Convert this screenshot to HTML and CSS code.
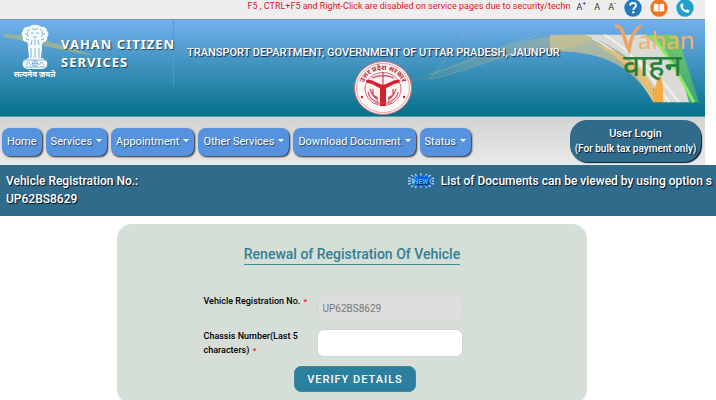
FILE: index.html
```html
<!DOCTYPE html>
<html lang="en">
<head>
    <meta charset="UTF-8">
    <meta name="viewport" content="width=device-width, initial-scale=1">
    <title>Vahan Citizen Services</title>
    <link rel="stylesheet" href="styles.css">
</head>
<body>

<div class="page-top">
    <!-- top strip -->
    <div class="topbar">
        <div class="top-marquee">F5 , CTRL+F5 and Right-Click are disabled on service pages due to security/techn</div>
        <div class="font-size">
            <button type="button" aria-label="Larger text">A<sup>+</sup></button>
            <button type="button" aria-label="Normal text">A</button>
            <button type="button" aria-label="Smaller text">A<sup>-</sup></button>
        </div>
        <div class="top-links">
            <a href="#" aria-label="Help">
                <svg width="18" height="18" viewBox="0 0 18 18">
                    <circle cx="9" cy="9" r="8.7" fill="#2478bd"/>
                    <path d="M6 6.6C6.2 4.7 7.4 4 9 4c1.8 0 3 .9 3 2.5 0 2.1-2.6 2-2.6 4.4" fill="none" stroke="#fff" stroke-width="1.9"/>
                    <circle cx="9.3" cy="13.3" r="1.2" fill="#fff"/>
                </svg>
            </a>
            <a href="#" aria-label="Manual">
                <svg width="18" height="18" viewBox="0 0 18 18">
                    <circle cx="9" cy="9" r="8.7" fill="#ee7420"/>
                    <path d="M3.8 5.2c2-.8 3.8-.6 5.2.5 1.4-1.1 3.2-1.3 5.2-.5v7.3c-2-.6-3.8-.4-5.2.6-1.4-1-3.2-1.2-5.2-.6z" fill="#fff"/>
                    <path d="M9 5.7v7.2" stroke="#ee7420" stroke-width="1"/>
                </svg>
            </a>
            <a href="#" aria-label="Contact">
                <svg width="18" height="18" viewBox="0 0 18 18">
                    <circle cx="9" cy="9" r="8.7" fill="#209fd0"/>
                    <path d="M6.3 4.2 7.7 6.7 6.7 8c.7 1.5 1.7 2.5 3.2 3.2l1.3-1 2.5 1.5c-.3 1.5-1.3 2.3-2.7 2C7.5 13 4.8 10.3 4.3 7c-.2-1.4.6-2.5 2-2.8z" fill="#fff"/>
                </svg>
            </a>
        </div>
    </div>

    <!-- banner -->
    <header class="banner">
        <svg class="banner-art" viewBox="0 0 705 97" preserveAspectRatio="none" aria-hidden="true">
            <defs>
                <linearGradient id="tail" x1="0" x2="1">
                    <stop offset="0" stop-color="#d8b95f" stop-opacity="0"/>
                    <stop offset=".45" stop-color="#d8c06f" stop-opacity=".45"/>
                    <stop offset="1" stop-color="#e8b45c"/>
                </linearGradient>
                <linearGradient id="leaf" x1="0" x2="0" y1="0" y2="1">
                    <stop offset="0" stop-color="#7ccf5c"/>
                    <stop offset="1" stop-color="#3fa878"/>
                </linearGradient>
            </defs>
            <path d="M4 14c30 2 60 12 90 22-30-4-60-13-90-19z" fill="#b9bc76" opacity=".65"/>
            <path d="M392 64C460 50 500 18 570 15h35c-22 9-42 17-56 17-60 0-90 30-157 32z" fill="url(#tail)" opacity=".45"/>
            <path d="M430 60c12-14 22-30 35-45M430 60c45-10 90-32 138-45M430 55c40-12 68-29 110-40" fill="none" stroke="#dcc46c" opacity=".3"/>
            <path d="M550 15h57c34 17 48 40 54 67h-8c-21-35-50-52-103-50z" fill="#e3c98b" opacity=".6"/>
            <path d="M585 15h62c20 12 34 43 46 68h-32c-13-35-45-57-76-68z" fill="#dadbd7"/>
            <path d="M604 15c26 14 45 38 65 68M592 18c29 15 45 35 62 64M630 36c24 13 35 29 49 47" fill="none" stroke="#fff" stroke-width="2" opacity=".6"/>
            <path d="M592 23c27 13 49 35 61 59V66c-14-21-35-35-61-43z" fill="#e5bf78"/>
            <path d="M660 55c-5 11-7 18-7 28h10c0-10 1-19-3-28z" fill="#f4ad43"/>
            <path d="M645 15h32l22 68h-10c-7-28-18-47-44-68z" fill="url(#leaf)" opacity=".9"/>
            <path d="M651 16c17 18 27 38 43 67" fill="none" stroke="#8aed63" stroke-width="3"/>
        </svg>
        <div class="brand">
            <div class="emblem">
                <svg width="30" height="46" viewBox="0 0 30 46" aria-hidden="true">
                    <g fill="#f4fbff">
                        <path d="M9 3c2-3 10-3 12 0 3-1 6 1 6 4 2 2 2 4 0 6 1 3-1 5-4 5l-2 5H9l-2-5c-3 0-5-2-4-5-2-2-2-4 0-6 0-3 3-5 6-4z"/>
                        <path d="M8 22h14v3l-1 8c1 2 5 2 6 5 1 4-1 7-5 7H8c-4 0-6-3-5-7 1-3 5-3 6-5l-1-8z"/>
                    </g>
                    <g fill="none" stroke="#7da9cf" stroke-width=".9">
                        <path d="M10 5c-3 2-3 6-1 8m11-8c3 2 3 6 1 8M12 4c1 2 5 2 6 0M11 9h3m2 0h3M13 13h4M5 9l2 2m18-2-2 2M6 15l3 1m15-1-3 1M12 16l-1 5m7-5 1 5M15 15v6"/>
                        <path d="M11 24v10m4-10v10m4-10v10M4 36h22M5 43h20"/>
                        <circle cx="15" cy="39.5" r="2.8"/>
                        <path d="M12 39.5h6m-3-3v6M6 41l2-3 3 3m8 0 2-3 3 3"/>
                    </g>
                </svg>
                <span>सत्यमेव जयते</span>
            </div>
            <h1>VAHAN CITIZEN<br>SERVICES</h1>
        </div>
        <div class="department">
            <h2>TRANSPORT DEPARTMENT, GOVERNMENT OF UTTAR PRADESH, JAUNPUR</h2>
            <svg class="seal" width="58" height="54" viewBox="0 0 58 54" aria-hidden="true">
                <ellipse cx="29" cy="27" rx="28.5" ry="26.5" fill="#fff8f8" stroke="#d76d76"/>
                <ellipse cx="29" cy="27" rx="26.5" ry="24.5" fill="none" stroke="#d77b83" stroke-width=".7"/>
                <path id="sealArc" d="M9 27a20 18 0 0 1 40 0" fill="none"/>
                <text font-size="7" font-weight="700" fill="#b52d3b"><textPath href="#sealArc" startOffset="50%" text-anchor="middle">उत्तर प्रदेश सरकार</textPath></text>
                <ellipse cx="29" cy="28" rx="18" ry="16.5" fill="#fff2f2" stroke="#d46b73"/>
                <path d="M12 19c7-1 9 3 17 5 8-2 10-6 17-5l-1 3c-6 0-9 4-13 5v18h-6V27c-4-1-7-5-13-5z" fill="#d4202e"/>
                <path d="M29 11v13M18 17c7-3 15-3 22 0M16 28c2 6 5 9 8 11M42 28c-2 6-5 9-8 11M19 28v6l5 3M39 28v6l-5 3M14 31c1 6 5 9 10 10M44 31c-1 6-5 9-10 10M20 42h18" fill="none" stroke="#cb4854" stroke-width="1.2"/>
                <circle cx="8" cy="36" r="1.2" fill="#d4202e"/>
                <circle cx="50" cy="36" r="1.2" fill="#d4202e"/>
            </svg>
        </div>
        <svg class="vahan-logo" width="82" height="62" viewBox="0 0 82 62" role="img" aria-label="Vahan">
            <text x="24" y="25" class="logo-en">ahan</text>
            <path d="M1 2c6 0 7 4 9 10 2 5 2 9 5 14C17 14 20 5 27 2" fill="none" stroke="#efa262" stroke-width="3.5"/>
            <text x="9" y="52" class="logo-hi">वाहन</text>
        </svg>
    </header>

    <!-- menu -->
    <nav class="menu">
        <div class="menu-items">
            <button type="button">Home</button>
            <button type="button" class="drop">Services</button>
            <button type="button" class="drop">Appointment</button>
            <button type="button" class="drop">Other Services</button>
            <button type="button" class="drop">Download Document</button>
            <button type="button" class="drop">Status</button>
        </div>
        <button type="button" class="login">User Login<small>(For bulk tax payment only)</small></button>
    </nav>
</div>

<!-- vehicle strip -->
<div class="vehicle-bar">
    <div class="vehicle-no">Vehicle Registration No.:<br>UP62BS8629</div>
    <div class="vehicle-marquee">
        <svg width="28" height="16" viewBox="0 0 28 16" aria-hidden="true">
            <path d="M1 8h26M1 5l26 6M1 11l26-6M4 2l20 12M4 14 24 2M8 1l12 14M8 15 20 1M14 0v16" stroke="#9fd0ff" stroke-width="1.3" stroke-dasharray="3 1"/>
            <path d="m6 4 3 1 1-3 3 2 2-2 2 2 3-2 1 3 3-1-2 4 2 4-3-1-1 3-3-2-2 2-2-2-3 2-1-3-3 1 2-4z" fill="#0864ee"/>
            <text x="14" y="11" class="new-text">NEW</text>
        </svg>
        <span>List of Documents can be viewed by using option s</span>
    </div>
</div>

<!-- form -->
<main>
    <form class="card">
        <h3>Renewal of Registration Of Vehicle</h3>
        <div class="fields">
            <label for="regNo">Vehicle Registration No. <b>*</b></label>
            <input type="text" id="regNo" value="UP62BS8629" disabled>
            <label for="chassisNo">Chassis Number(Last 5 characters) <b>*</b></label>
            <input type="text" id="chassisNo" maxlength="5">
        </div>
        <button type="button" class="verify">VERIFY DETAILS</button>
    </form>
</main>

</body>
</html>
```
FILE: styles.css
```css
* {
    box-sizing: border-box;
}
body {
    margin: 0;
    background: #fff;
    font-family: Roboto, "Noto Sans", sans-serif;
    color: #000;
}
h1, h2, h3 {
    margin: 0;
}
button, input {
    font-family: inherit;
}
.page-top {
    margin-right: 11px;
}

/* top strip */
.topbar {
    display: flex;
    justify-content: flex-end;
    height: 19px;
    padding-right: 11px;
    background: #eee;
    overflow: hidden;
}
.top-marquee {
    white-space: nowrap;
    color: #e8101c;
    font-size: 9px;
    font-weight: 400;
    line-height: 12px;
}
.font-size {
    display: flex;
    gap: 8px;
    margin-left: 6px;
}
.font-size button {
    padding: 0;
    border: 0;
    background: none;
    color: #333;
    font-size: 9px;
    line-height: 14px;
    display: flex;
}
.font-size sup {
    font-size: 7px;
    line-height: 9px;
}
.top-links {
    display: flex;
    gap: 8px;
    margin-left: 8px;
}
.top-links svg {
    display: block;
    margin-top: -1px;
}

/* banner */
.banner {
    position: relative;
    display: flex;
    height: 98px;
    border-top: 1px solid #6b9fb0;
    border-bottom: 1px solid #5a9ba8;
    background: linear-gradient(#73b0ed, #05718a);
    color: #fff;
}
.banner-art {
    position: absolute;
    width: 100%;
    height: 100%;
}
.brand {
    position: relative;
    display: flex;
    align-items: flex-start;
    gap: 4px;
    width: 174px;
    height: 66px;
    padding: 4px 0 0 12px;
    border-right: 1px solid #5b97c6;
}
.emblem {
    display: flex;
    flex-direction: column;
    align-items: center;
    width: 45px;
    flex: none;
}
.emblem span {
    font-size: 8px;
    font-weight: 700;
    line-height: 10px;
    white-space: nowrap;
}
.brand h1 {
    margin-top: 11px;
    font-family: "Noto Sans", sans-serif;
    font-size: 13px;
    font-weight: 700;
    line-height: 18px;
    letter-spacing: 1px;
    white-space: nowrap;
    text-shadow: 1px 1px 1px #245;
}
.department {
    position: relative;
    display: flex;
    flex-direction: column;
    align-items: center;
    width: 404px;
    padding: 25px 0 0 13px;
}
.department h2 {
    align-self: flex-start;
    font-size: 11px;
    font-weight: 500;
    line-height: 16px;
    white-space: nowrap;
    text-shadow: 1px 1px 1px #124;
}
.seal {
    display: block;
}
.vahan-logo {
    position: absolute;
    right: 9px;
    top: 4px;
}
.logo-en {
    font-family: "Noto Sans", sans-serif;
    font-size: 24px;
    fill: #f4b070;
}
.logo-hi {
    font-family: "Noto Sans", sans-serif;
    font-size: 30px;
    font-weight: 500;
    fill: #23823d;
}

/* menu */
.menu {
    display: flex;
    justify-content: space-between;
    height: 48px;
    padding: 3px 4px 0 2px;
    background: linear-gradient(#d3d3d3, #e9e9e9);
}
.menu-items {
    display: flex;
    align-items: flex-start;
    gap: 4px;
    padding-top: 8px;
}
.menu-items button {
    height: 28px;
    padding: 0 5px;
    border: 0;
    border-radius: 8px;
    background: #5593df;
    box-shadow: 1px 1px 2px #222;
    color: #fff;
    font-size: 11px;
    font-weight: 400;
    line-height: 28px;
    white-space: nowrap;
    text-shadow: 1px 1px 1px #246;
}
.drop::after {
    content: "";
    display: inline-block;
    margin-left: 4px;
    border: 3px solid transparent;
    border-top-color: #fff;
    border-bottom: 0;
    vertical-align: 3px;
}
.login {
    width: 131px;
    height: 42px;
    padding: 0;
    border: 0;
    border-radius: 17px;
    background: #316b8c;
    box-shadow: 1px 1px 1px #012;
    color: #fff;
    font-size: 11px;
    font-weight: 500;
    line-height: 15px;
    text-shadow: 1px 1px 1px #012;
}
.login small {
    display: block;
    font-size: 10px;
}

/* vehicle strip */
.vehicle-bar {
    display: flex;
    justify-content: space-between;
    height: 51px;
    padding: 7px 4px 0 6px;
    background: #316b8c;
    color: #fff;
    font-size: 12px;
    font-weight: 500;
    line-height: 18px;
    text-shadow: 1px 1px 1px #012;
}
.vehicle-marquee {
    display: flex;
    align-items: flex-start;
    gap: 6px;
    white-space: nowrap;
}
.vehicle-marquee svg {
    margin-top: 1px;
}
.new-text {
    font-size: 7px;
    font-weight: 700;
    text-anchor: middle;
    fill: #35c4ff;
}

/* form */
main {
    padding: 8px 129px 0 117px;
}
.card {
    display: flex;
    flex-direction: column;
    align-items: center;
    padding: 20px 0 12px;
    border-radius: 15px;
    background: #d5dfd7;
}
.card h3 {
    border-bottom: 1px solid #438c9c;
    color: #347e91;
    font-size: 14px;
    font-weight: 500;
    line-height: 20px;
}
.fields {
    display: grid;
    grid-template-columns: 106px 146px;
    gap: 7px;
    margin: 29px 38px 0 0;
}
.fields label {
    font-size: 9px;
    font-weight: 500;
    line-height: 14px;
}
.fields b {
    margin-left: 1px;
    color: #e22;
    font-size: 8px;
}
.fields input {
    width: 100%;
    height: 28px;
    padding: 0 5px;
    border: 1px solid #d2d6d2;
    border-radius: 7px;
    background: #fff;
    color: #777;
    font-size: 10px;
}
.fields input:disabled {
    background: #ddd;
}
.verify {
    height: 26px;
    margin: 8px 0 0 6px;
    padding: 0 12px;
    border: 1px solid #438798;
    border-radius: 7px;
    background: #2c809f;
    color: #fff;
    font-size: 11px;
    font-weight: 500;
    letter-spacing: 1px;
}
```
